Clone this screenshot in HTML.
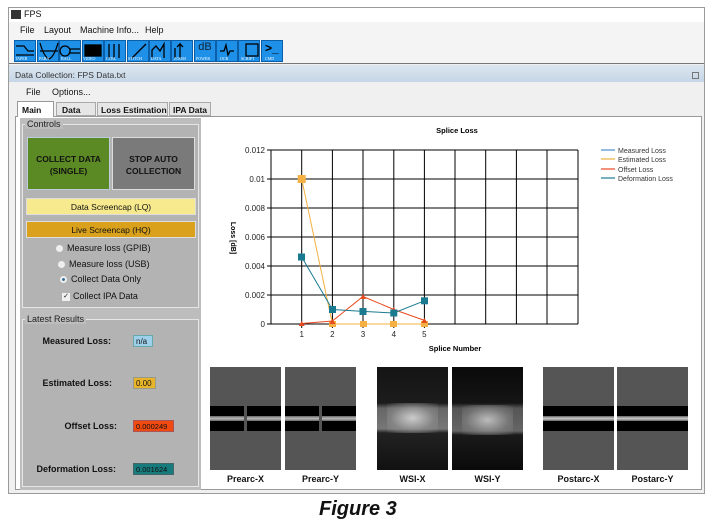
<!DOCTYPE html>
<html><head><meta charset="utf-8"><style>
*{margin:0;padding:0;box-sizing:border-box}
body{width:714px;height:526px;background:#fff;position:relative;overflow:hidden;font-family:"Liberation Sans",sans-serif;font-size:9px;color:#111}
.a{position:absolute;white-space:nowrap}
.ic{position:absolute;top:40px;width:22px;height:22px;background:#1e90e8;border:1px solid #0b5fa8}
.lbl{font-weight:bold;font-size:9px}
.img{position:absolute;top:367px;width:71px;height:103px;background:#555}
.cap{position:absolute;top:474px;width:71px;text-align:center;font-weight:bold;font-size:9px}
.tab{position:absolute;top:102px;height:14px;background:#e6e6e6;border:1px solid #aaa;font-weight:bold;font-size:8.5px;padding:2px 3px;white-space:nowrap;overflow:hidden}
</style></head><body>
<div class="a" style="left:8px;top:7px;width:697px;height:487px;border:1px solid #9a9a9a;background:#f0f0f0"></div>
<div class="a" style="left:9px;top:8px;width:695px;height:14px;background:#fff"></div>
<div class="a" style="left:11px;top:10px;width:10px;height:9px;background:#333"></div>
<div class="a" style="left:24px;top:9px;font-size:9px">FPS</div>
<div class="a" style="left:9px;top:22px;width:695px;height:42px;background:#f4f4f4;border-bottom:1px solid #777"></div>
<div class="a" style="left:20px;top:25px;font-size:9px">File</div>
<div class="a" style="left:44px;top:25px;font-size:9px">Layout</div>
<div class="a" style="left:80px;top:25px;font-size:9px">Machine Info...</div>
<div class="a" style="left:145px;top:25px;font-size:9px">Help</div>
<div class="ic" style="left:14px"></div><div class="ic" style="left:37px"></div><div class="ic" style="left:59px"></div><div class="ic" style="left:82px"></div><div class="ic" style="left:104px"></div><div class="ic" style="left:127px"></div><div class="ic" style="left:149px"></div><div class="ic" style="left:171px"></div><div class="ic" style="left:194px;color:#123;font-size:11px;text-align:center">dB</div><div class="ic" style="left:216px"></div><div class="ic" style="left:238px"></div><div class="ic" style="left:261px;color:#000;font-size:12px;font-weight:bold;padding-left:3px">&gt;_</div>
<svg class="a" style="left:14px;top:40px" width="270" height="22"><g stroke="#000" stroke-width="1.3" fill="none">
<path d="M2 6h8l4 5h6M2 15h18"/><path d="M26 3q4 14 9 16q5-2 9-16M26 11h18"/><circle cx="51" cy="11" r="5"/><path d="M56 9h10M56 13h10"/>
<rect x="71" y="5" width="16" height="11" fill="#000"/><path d="M95 4v14M100 4v14M105 4v14"/><path d="M118 18l14-14"/><path d="M138 18v-8l4-4 4 5 4-7v14"/><path d="M161 18v-10M166 18v-14l-3 3M166 4l3 3"/><path d="M206 11h4l2-6 2 10 2-4h4"/><rect x="232" y="4" width="12" height="12"/></g>
<g fill="#fff" font-size="4" font-family="Liberation Serif"><text x="1" y="20">TAPER</text><text x="25" y="20">PARA</text><text x="47" y="20">BALL</text><text x="69" y="20">VIDEO</text><text x="92" y="20">CTRL</text><text x="114" y="20">STITCH</text><text x="137" y="20">DATA</text><text x="160" y="20">ZOOM</text><text x="182" y="20">POWER</text><text x="206" y="20">OCR</text><text x="227" y="20">SCRIPT</text><text x="251" y="20">CMD</text></g></svg>
<div class="a" style="left:9px;top:65px;width:695px;height:17px;background:linear-gradient(#dce6f0,#c6d6e6)"></div>
<div class="a" style="left:15px;top:70px;font-size:8.5px;color:#333">Data Collection: FPS Data.txt</div>
<div class="a" style="left:692px;top:72px;width:7px;height:7px;border:1px solid #777"></div>
<div class="a" style="left:26px;top:87px;font-size:9px">File</div>
<div class="a" style="left:52px;top:87px;font-size:9px">Options...</div>
<div class="a" style="left:17px;top:101px;width:37px;height:16px;background:#fff;border:1px solid #999;border-bottom:none;font-weight:bold;font-size:8.5px;padding:3px 4px;z-index:2">Main</div>
<div class="tab" style="left:56px;width:40px;padding-left:5px">Data</div>
<div class="tab" style="left:97px;width:71px">Loss Estimation</div>
<div class="tab" style="left:169px;width:42px">IPA Data</div>
<div class="a" style="left:15px;top:116px;width:687px;height:374px;background:#fff;border:1px solid #999"></div>
<div class="a" style="left:20px;top:118px;width:181px;height:372px;background:#bdbdbd"></div>
<div class="a" style="left:22px;top:124px;width:177px;height:184px;border:1px solid #e6e6e6;background:#b3b3b3"></div>
<div class="a" style="left:25px;top:119px;background:#bdbdbd;padding:0 2px;font-size:9px;color:#222">Controls</div>
<div class="a" style="left:27px;top:137px;width:83px;height:53px;background:#5b8a24;border:1px solid #bcd;text-align:center;font-weight:bold;font-size:8.5px;padding-top:15px;line-height:12px">COLLECT DATA<br>(SINGLE)</div>
<div class="a" style="left:112px;top:137px;width:83px;height:53px;background:#7a7a7a;border:1px solid #ddd;text-align:center;font-weight:bold;font-size:8.5px;padding-top:15px;line-height:12px">STOP AUTO<br>COLLECTION</div>
<div class="a" style="left:26px;top:198px;width:170px;height:17px;background:#f6e98e;border:1px solid #ddd;text-align:center;font-size:8.5px;padding-top:3px">Data Screencap (LQ)</div>
<div class="a" style="left:26px;top:221px;width:170px;height:17px;background:#d9a11c;border:1px solid #ddd;text-align:center;font-size:8.5px;padding-top:3px">Live Screencap (HQ)</div>
<div class="a" style="left:56px;top:245px;width:7px;height:7px;border-radius:50%;background:#eee"></div><div class="a" style="left:67px;top:243px;font-size:9px">Measure loss (GPIB)</div>
<div class="a" style="left:58px;top:261px;width:7px;height:7px;border-radius:50%;background:#eee"></div><div class="a" style="left:69px;top:259px;font-size:9px">Measure loss (USB)</div>
<div class="a" style="left:60px;top:276px;width:7px;height:7px;border-radius:50%;background:#eee;border:2px solid #eee;box-shadow:inset 0 0 0 2px #2a6a9a"></div><div class="a" style="left:71px;top:274px;font-size:9px">Collect Data Only</div>
<div class="a" style="left:62px;top:293px;width:8px;height:8px;background:#f0f0f0;font-size:7px;line-height:8px;text-align:center">✓</div><div class="a" style="left:73px;top:291px;font-size:9px">Collect IPA Data</div>
<div class="a" style="left:22px;top:319px;width:177px;height:168px;border:1px solid #e6e6e6;background:#b3b3b3"></div>
<div class="a" style="left:25px;top:314px;background:#bdbdbd;padding:0 2px;font-size:9px;color:#222">Latest Results</div>
<div class="a lbl" style="right:603px;top:336px">Measured Loss:</div>
<div class="a" style="left:133px;top:335px;width:20px;height:12px;background:#9fd0ea;border:1px solid #6aa;font-size:8px;padding:1px 2px">n/a</div>
<div class="a lbl" style="right:602px;top:378px">Estimated Loss:</div>
<div class="a" style="left:133px;top:377px;width:23px;height:12px;background:#e8b52a;border:1px solid #998;font-size:8px;padding:1px 2px">0.00</div>
<div class="a lbl" style="right:597px;top:421px">Offset Loss:</div>
<div class="a" style="left:133px;top:420px;width:41px;height:12px;background:#f04a10;border:1px solid #a55;font-size:7.5px;padding:1px 2px">0.000249</div>
<div class="a lbl" style="right:598px;top:464px">Deformation Loss:</div>
<div class="a" style="left:133px;top:463px;width:41px;height:12px;background:#177a7c;border:1px solid #466;font-size:7.5px;padding:1px 2px">0.001624</div>
<svg class="a" style="left:205px;top:118px" width="495" height="245">
<text x="252" y="15" font-size="7.5" font-weight="bold" text-anchor="middle">Splice Loss</text>
<g stroke="#000" stroke-width="1">
<path d="M66 32h307M66 61h307M66 90h307M66 119h307M66 148h307M66 177h307M66 206h307"/>
<path d="M66 32v174M96.7 32v174M127.4 32v174M158 32v174M188.8 32v174M219.4 32v174M250 32v174M280.7 32v174M311.4 32v174M342 32v174M373 32v174"/>
<path d="M62 32h4M62 61h4M62 90h4M62 119h4M62 148h4M62 177h4M62 206h4M96.7 206v4M127.4 206v4M158 206v4M188.8 206v4M219.4 206v4"/></g>
<g font-size="8" fill="#222" text-anchor="end"><text x="60" y="35">0.012</text><text x="60" y="64">0.01</text><text x="60" y="93">0.008</text><text x="60" y="122">0.006</text><text x="60" y="151">0.004</text><text x="60" y="180">0.002</text><text x="60" y="209">0</text></g>
<g font-size="8" fill="#222" text-anchor="middle"><text x="96.7" y="219">1</text><text x="127.4" y="219">2</text><text x="158" y="219">3</text><text x="188.8" y="219">4</text><text x="219.4" y="219">5</text></g>
<text x="250" y="233" font-size="7.5" font-weight="bold" text-anchor="middle">Splice Number</text>
<text transform="translate(26,120) rotate(90)" font-size="7" font-weight="bold" text-anchor="middle">Loss [dB]</text>
<polyline points="96.7,61 127.4,206 158,206 188.8,206 219.4,206" fill="none" stroke="#f4b042" stroke-width="1"/>
<g fill="#f4b042"><rect x="92.7" y="57" width="8" height="8"/><rect x="124" y="203" width="7" height="6"/><rect x="155" y="203" width="7" height="6"/><rect x="185" y="203" width="7" height="6"/><rect x="216" y="203" width="7" height="6"/></g>
<polyline points="96.7,205.5 127.4,203 158,178.5 188.8,191.5 219.4,202.4" fill="none" stroke="#e84a20" stroke-width="1"/>
<g fill="#e84a20"><path d="M93.7 208l3-5 3 5z"/><path d="M124.4 206l3-5 3 5z"/><path d="M155 181l3-5 3 5z"/><path d="M185.8 194l3-5 3 5z"/><path d="M216.4 205l3-5 3 5z"/></g>
<polyline points="96.7,139 127.4,191.5 158,193.4 188.8,195 219.4,182.8" fill="none" stroke="#1a7a90" stroke-width="1"/>
<g fill="#1a7a90"><rect x="93" y="135.5" width="7" height="7"/><rect x="124" y="188" width="7" height="7"/><rect x="154.5" y="190" width="7" height="7"/><rect x="185.3" y="191.5" width="7" height="7"/><rect x="216" y="179.3" width="7" height="7"/></g>
<g stroke-width="1.2"><path d="M396 32h14" stroke="#4a90d8"/><path d="M396 41h14" stroke="#f4b042"/><path d="M396 51h14" stroke="#e84a20"/><path d="M396 60h14" stroke="#1a7a90"/></g>
<g font-size="7" fill="#333"><text x="413" y="35">Measured Loss</text><text x="413" y="44">Estimated Loss</text><text x="413" y="54">Offset Loss</text><text x="413" y="63">Deformation Loss</text></g>
</svg>
<div class="img" style="left:210px"><div class="a" style="left:0;top:39px;width:71px;height:25px;background:#000"></div><div class="a" style="left:0;top:49px;width:71px;height:5px;background:linear-gradient(#666,#bbb,#666)"></div><div class="a" style="left:34px;top:39px;width:3px;height:25px;background:#555"></div></div>
<div class="img" style="left:285px"><div class="a" style="left:0;top:39px;width:71px;height:25px;background:#000"></div><div class="a" style="left:0;top:49px;width:71px;height:5px;background:linear-gradient(#666,#bbb,#666)"></div><div class="a" style="left:34px;top:39px;width:3px;height:25px;background:#555"></div></div>
<div class="img" style="left:377px;background:linear-gradient(#141414,#1c1c1c 35%,#666 40%,#777 60%,#222 64%,#111)"><div class="a" style="left:10px;top:36px;width:51px;height:30px;background:radial-gradient(ellipse at 50% 50%,#ccc,rgba(150,150,150,.5) 60%,rgba(0,0,0,0) 100%)"></div></div>
<div class="img" style="left:452px;background:linear-gradient(#0a0a0a,#151515 35%,#555 40%,#666 62%,#1a1a1a 66%,#0a0a0a)"><div class="a" style="left:10px;top:38px;width:51px;height:30px;background:radial-gradient(ellipse at 50% 50%,#bbb,rgba(140,140,140,.5) 60%,rgba(0,0,0,0) 100%)"></div></div>
<div class="img" style="left:543px"><div class="a" style="left:0;top:39px;width:71px;height:25px;background:#000"></div><div class="a" style="left:0;top:49px;width:71px;height:5px;background:linear-gradient(#666,#ccc,#666)"></div></div>
<div class="img" style="left:617px"><div class="a" style="left:0;top:39px;width:71px;height:25px;background:#000"></div><div class="a" style="left:0;top:49px;width:71px;height:5px;background:linear-gradient(#666,#ccc,#666)"></div></div>
<div class="cap" style="left:210px">Prearc-X</div><div class="cap" style="left:285px">Prearc-Y</div><div class="cap" style="left:377px">WSI-X</div><div class="cap" style="left:452px">WSI-Y</div><div class="cap" style="left:543px">Postarc-X</div><div class="cap" style="left:617px">Postarc-Y</div>
<div class="a" style="left:319px;top:498px;font-size:20px;font-weight:bold;font-style:italic;color:#111">Figure 3</div>
</body></html>
